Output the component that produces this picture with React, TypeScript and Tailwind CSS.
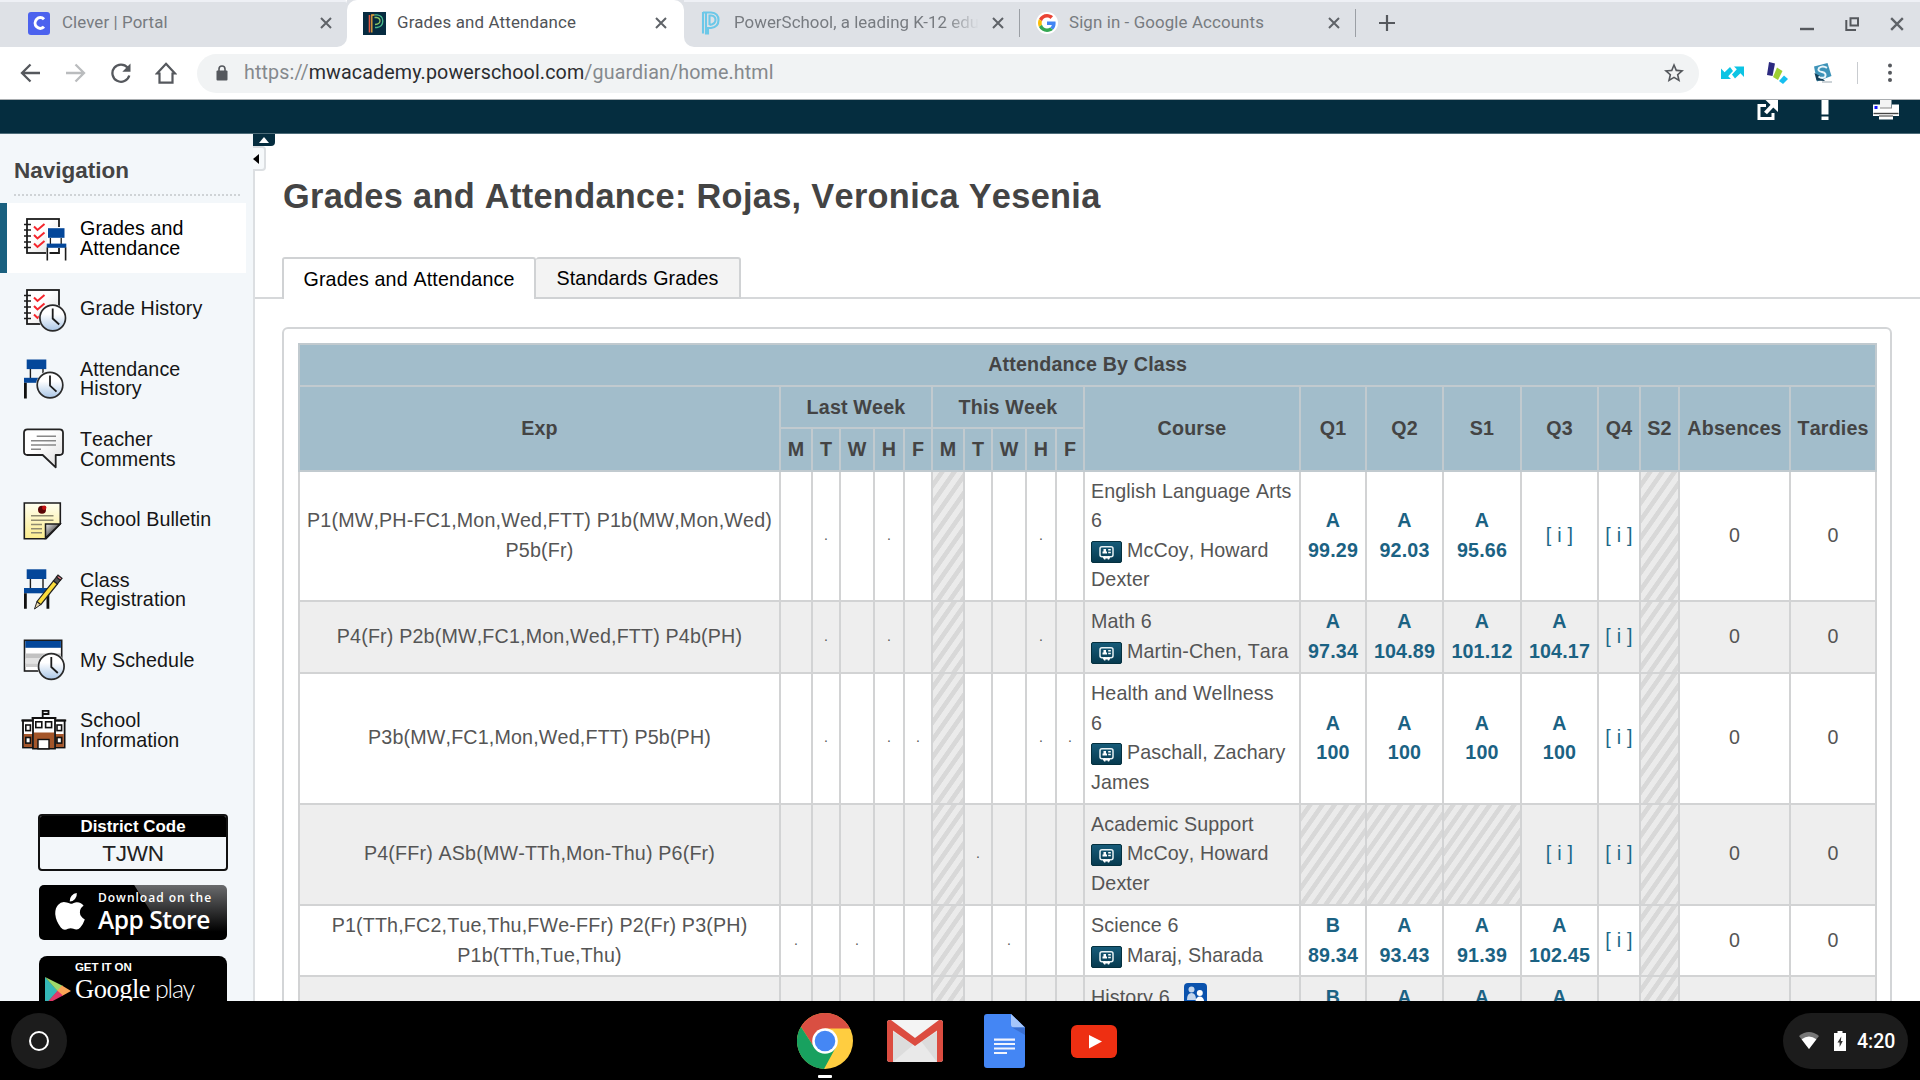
import React from "react";

type IconProps = { children: React.ReactNode };

/* ---------- sidebar icons ---------- */

function NavIcon({ children }: IconProps) {
  return (
    <svg viewBox="0 0 46 46" className="h-[46px] w-[46px] shrink-0 overflow-visible" fill="none">
      <defs>
        <linearGradient id="clockFace" x1="0" y1="0" x2="0" y2="1">
          <stop offset="0.35" stopColor="#ffffff" />
          <stop offset="1" stopColor="#a9c6e6" />
        </linearGradient>
        <linearGradient id="paper" x1="0" y1="0" x2="1" y2="1">
          <stop offset="0.4" stopColor="#ffffff" />
          <stop offset="1" stopColor="#dcdcdc" />
        </linearGradient>
        <linearGradient id="note" x1="0" y1="0" x2="0" y2="1">
          <stop offset="0" stopColor="#fffff0" />
          <stop offset="1" stopColor="#fbec8c" />
        </linearGradient>
        <linearGradient id="fold" x1="0" y1="0" x2="1" y2="1">
          <stop offset="0" stopColor="#eeeeee" />
          <stop offset="0.6" stopColor="#555555" />
        </linearGradient>
      </defs>
      {children}
    </svg>
  );
}

function Notebook() {
  return (
    <g>
      <rect x="5" y="4" width="32" height="34" fill="url(#paper)" stroke="#1c1c1c" strokeWidth="1.8" />
      <path d="M2 9.5h7M2 15h7M2 21h7M2 27h7M2 32.5h7" stroke="#1c1c1c" strokeWidth="1.7" />
      <path d="M12 11.5l3.5 3.5 7-6M12 20l3.5 3.5 7-6M12 28.5l3.5 3.5 7-6" stroke="#f5262c" strokeWidth="2" />
    </g>
  );
}

function Clock({ x, y }: { x: number; y: number }) {
  return (
    <g>
      <circle cx={x} cy={y} r="14" fill="#f3f7fa" />
      <circle cx={x} cy={y} r="12.8" fill="url(#clockFace)" stroke="#2a2a2a" strokeWidth="1.7" />
      <path d={`M${x} ${y - 9.5}V${y + 0.5}L${x + 6.5} ${y + 6.5}`} stroke="#1c1c1c" strokeWidth="1.8" />
    </g>
  );
}

function GradesAttendanceIcon() {
  return (
    <NavIcon>
      <Notebook />
      <path d="M24 27h21v19h-21z" fill="#fff" />
      <path d="M27.5 38H37V33" stroke="#1c1c1c" strokeWidth="1.8" />
      <rect x="25" y="12" width="19" height="17" fill="#fff" />
      <rect x="26" y="13.2" width="16.5" height="9.6" fill="#04479a" />
      <path d="M28.4 23v6M39.2 23v6" stroke="#1c1c1c" strokeWidth="1.3" />
      <rect x="24.7" y="28.6" width="19.6" height="4.2" fill="#04479a" />
      <path d="M25.3 32.5V45.5M43.6 32.5V45.5" stroke="#1c1c1c" strokeWidth="1.6" />
    </NavIcon>
  );
}

function GradeHistoryIcon() {
  return (
    <NavIcon>
      <Notebook />
      <Clock x={30.7} y={32} />
    </NavIcon>
  );
}

function AttendanceHistoryIcon() {
  return (
    <NavIcon>
      <rect x="4.7" y="3.5" width="19.6" height="9.6" fill="#04479a" />
      <path d="M8.4 13v9M21 13v4" stroke="#1c1c1c" strokeWidth="1.4" />
      <rect x="2" y="21.8" width="14" height="5" fill="#04479a" />
      <path d="M3.4 26.8V42.5" stroke="#111" strokeWidth="2.8" />
      <Clock x={28} y={29.1} />
    </NavIcon>
  );
}

function TeacherCommentsIcon() {
  return (
    <NavIcon>
      <path
        d="M5.5 3.3H37.5Q41 3.3 41 6.8V25.5Q41 29 37.5 29H33.7V41.3L20.7 29H5.5Q2 29 2 25.5V6.8Q2 3.3 5.5 3.3Z"
        fill="url(#paper)"
        stroke="#222"
        strokeWidth="1.8"
        strokeLinejoin="round"
      />
      <path d="M14.7 10.3H34M9 14.7H34M9 19H34M9 23.3H19" stroke="#888" strokeWidth="1.6" />
    </NavIcon>
  );
}

function SchoolBulletinIcon() {
  return (
    <NavIcon>
      <path d="M2.3 6H38.3V27L24 41.8H2.3Z" fill="url(#note)" stroke="#1c1c1c" strokeWidth="1.6" />
      <path d="M23.5 41V27H38Z" fill="url(#fold)" stroke="#1c1c1c" strokeWidth="1.5" />
      <path d="M9 18.8H31.5M9 23.3H31.5M9 27.5H20M9 31.7H20M9 35.8H20" stroke="#8f8b70" strokeWidth="1.5" />
      <circle cx="20" cy="12.7" r="4" fill="#5a0505" />
      <circle cx="22.2" cy="10.8" r="2.2" fill="#c01010" />
    </NavIcon>
  );
}

function ClassRegistrationIcon() {
  return (
    <NavIcon>
      <rect x="4.7" y="2.3" width="19.6" height="9.7" fill="#04479a" />
      <path d="M8.4 12v9M21 12v9" stroke="#1c1c1c" strokeWidth="1.4" />
      <rect x="2" y="21" width="25" height="5.3" fill="#04479a" />
      <path d="M3.4 26.3V41.7M25.9 26.3V41.7" stroke="#111" strokeWidth="2.8" />
      <path d="M12.5 42L15 34.5L18.7 37.6Z" fill="#ead9b0" stroke="#222" strokeWidth="1" />
      <path d="M15 34.5L31.5 13.8L35.4 17L18.8 37.7Z" fill="#fbdc3c" stroke="#222" strokeWidth="1.2" />
      <path d="M31.5 13.8L34.5 10L38.4 13.2L35.4 17Z" fill="#555" stroke="#222" strokeWidth="1.2" />
      <path d="M34.5 10L36 8.2L40 11.4L38.4 13.2Z" fill="#f0808a" stroke="#222" strokeWidth="1.2" />
    </NavIcon>
  );
}

function MyScheduleIcon() {
  return (
    <NavIcon>
      <rect x="2.5" y="3.3" width="37.2" height="30.7" fill="#fff" stroke="#1c1c1c" strokeWidth="1.6" />
      <rect x="3.3" y="4" width="35.6" height="6.8" fill="#04479a" />
      <rect x="3.3" y="16.5" width="35.6" height="5" fill="#c2c2c2" />
      <rect x="3.3" y="21.5" width="35.6" height="5" fill="#e3e3e3" />
      <rect x="3.3" y="26.5" width="35.6" height="3.5" fill="#cdcdcd" />
      <Clock x={29.3} y={29.5} />
    </NavIcon>
  );
}

function SchoolInformationIcon() {
  return (
    <NavIcon>
      <rect x="1" y="12.5" width="41.6" height="27" fill="#fff" stroke="#111" strokeWidth="1.8" />
      <rect x="1.8" y="26" width="40" height="13" fill="#a4562a" />
      <path d="M-0.6 12.5H44.2" stroke="#111" strokeWidth="1.8" />
      <rect x="11" y="10" width="22" height="30.6" fill="#fff" stroke="#111" strokeWidth="1.8" />
      <rect x="12" y="24.5" width="20" height="15.5" fill="#a4562a" />
      <path d="M9.6 10H34.4M20.7 10V2.8H26.5V6H20.7" stroke="#111" strokeWidth="1.8" />
      <rect x="16" y="31.5" width="11" height="9.3" fill="#fff" stroke="#111" strokeWidth="1.4" />
      <g fill="#fff" stroke="#111" strokeWidth="1.6">
        <rect x="13.8" y="13.8" width="6" height="5.8" />
        <rect x="23.6" y="13.8" width="6" height="5.8" />
        <rect x="3.8" y="17" width="4.6" height="5.6" />
        <rect x="35" y="17" width="4.6" height="5.6" />
        <rect x="3.8" y="29.5" width="4.6" height="5.6" />
        <rect x="35" y="29.5" width="4.6" height="5.6" />
      </g>
    </NavIcon>
  );
}

/* ---------- browser chrome ---------- */

function CloseX({ className }: { className: string }) {
  return (
    <svg viewBox="0 0 12 12" className={className} stroke="#5f6368" strokeWidth="2" fill="none">
      <path d="M1 1L11 11M11 1L1 11" />
    </svg>
  );
}

function PLogo({ colored }: { colored: boolean }) {
  return colored ? (
    <svg viewBox="0 0 23 23" className="h-[23px] w-[23px]" fill="none" strokeWidth="1.3">
      <rect width="23" height="23" fill="#062b40" />
      <path d="M6.5 20.5V3" stroke="#e05540" strokeWidth="1.6" />
      <path d="M8.8 20.5V3H11.5" stroke="#f0a83a" />
      <path d="M11.5 2.8H14Q19.8 3.5 19.8 9T14 15.5H12" stroke="#49b98c" />
      <path d="M11.5 5.5H13.5Q17 6 17 9T12 12.5" stroke="#8fc863" />
    </svg>
  ) : (
    <svg viewBox="0 0 20 24" className="h-[24px] w-[20px]" fill="none" stroke="#6cc8e8" strokeWidth="2.1">
      <path d="M2 1V22.5M5 1V22.5H7V17H10Q17.5 16 17.5 9T10 1.5H2M8.5 14V4.5H10Q14.5 5 14.5 9T8.5 14" />
    </svg>
  );
}

function GoogleG() {
  return (
    <svg viewBox="0 0 48 48" className="h-[18px] w-[18px]">
      <path fill="#EA4335" d="M24 9.5c3.54 0 6.71 1.22 9.21 3.6l6.85-6.85C35.9 2.38 30.47 0 24 0 14.62 0 6.51 5.38 2.56 13.22l7.98 6.19C12.43 13.72 17.74 9.5 24 9.5z" />
      <path fill="#4285F4" d="M46.98 24.55c0-1.57-.15-3.09-.38-4.55H24v9.02h12.94c-.58 2.96-2.26 5.48-4.78 7.18l7.73 6c4.51-4.18 7.09-10.36 7.09-17.65z" />
      <path fill="#FBBC05" d="M10.53 28.59c-.48-1.45-.76-2.99-.76-4.59s.27-3.14.76-4.59l-7.98-6.19C.92 16.46 0 20.12 0 24c0 3.88.92 7.54 2.56 10.78l7.97-6.19z" />
      <path fill="#34A853" d="M24 48c6.48 0 11.93-2.13 15.89-5.81l-7.73-6c-2.15 1.45-4.92 2.3-8.16 2.3-6.26 0-11.57-4.22-13.47-9.91l-7.98 6.19C6.51 42.62 14.62 48 24 48z" />
    </svg>
  );
}

function Tabs() {
  return (
    <div className="flex h-[47px] shrink-0 font-[Roboto,sans-serif] text-[16.87px] text-[#777b80]">
      <div className="flex w-[347px] bg-[linear-gradient(90deg,#dee1e6_50%,#fff_50%)]">
        <div className="flex w-full items-center rounded-br-[10px] rounded-tr-[3px] border-t-2 border-[#eef0f5] bg-[#dee1e6] pb-[3px] pl-[28px]">
          <div className="grid h-[23px] w-[22px] place-items-center rounded-[3px] bg-[#4c62ee]">
            <svg viewBox="0 0 16 16" className="h-[16px] w-[16px]" fill="none" stroke="#fff" strokeWidth="3">
              <path d="M13 4.2A5.2 5.4 0 1 0 13 11.8" />
            </svg>
          </div>
          <span className="ml-[12px] w-[258px] whitespace-nowrap tracking-[0.1px]">Clever | Portal</span>
          <CloseX className="h-[12px] w-[12px]" />
        </div>
      </div>
      <div className="w-[337px] bg-[#dee1e6]">
        <div className="flex h-full items-center rounded-t-[10px] bg-white pb-px pl-[16px] text-[#505357]">
          <PLogo colored />
          <span className="ml-[11px] w-[258px] whitespace-nowrap tracking-[0.18px]">Grades and Attendance</span>
          <CloseX className="h-[12px] w-[12px]" />
        </div>
      </div>
      <div className="flex grow bg-white">
        <div className="flex w-full items-center rounded-bl-[10px] border-t-2 border-[#eef0f5] bg-[#dee1e6] pb-[3px] pl-[17px]">
          <PLogo colored={false} />
          <span className="ml-[13px] w-[245px] overflow-hidden whitespace-nowrap tracking-[0.03px] [mask-image:linear-gradient(90deg,#000_86%,transparent_100%)]">
            PowerSchool, a leading K-12 education
          </span>
          <CloseX className="ml-[13px] h-[12px] w-[12px]" />
          <div className="ml-[15px] h-[28px] w-px bg-[#9b9fa5]" />
          <div className="ml-[16px] grid h-[22px] w-[22px] place-items-center rounded-full bg-white">
            <GoogleG />
          </div>
          <span className="ml-[11px] w-[259px] whitespace-nowrap tracking-[0.12px]">Sign in - Google Accounts</span>
          <CloseX className="h-[12px] w-[12px]" />
          <div className="ml-[15px] h-[28px] w-px bg-[#9b9fa5]" />
          <svg viewBox="0 0 18 18" className="ml-[22px] h-[18px] w-[18px]" stroke="#55585d" strokeWidth="2.2">
            <path d="M9 1V17M1 9H17" />
          </svg>
          <div className="grow" />
          <svg viewBox="0 0 14 14" className="mt-[2px] h-[14px] w-[14px]" stroke="#55585d" strokeWidth="2.4">
            <path d="M0 12H14" />
          </svg>
          <svg viewBox="0 0 14 14" className="ml-[31px] mt-[2px] h-[14px] w-[14px]" fill="none" stroke="#55585d" strokeWidth="2">
            <path d="M5.5 1.2H13V8.6H5.5ZM1.3 3V13H11" />
          </svg>
          <CloseX className="ml-[31px] mr-[16px] mt-[2px] h-[14px] w-[14px]" />
        </div>
      </div>
    </div>
  );
}

function Toolbar() {
  return (
    <div className="flex h-[53px] shrink-0 items-center border-b border-[#a9adb0] bg-white font-[Roboto,sans-serif]">
      <svg viewBox="0 0 20 20" className="ml-[20px] h-[20px] w-[20px]" fill="none" stroke="#55585d" strokeWidth="2.3">
        <path d="M20 10H2M10.5 1.5L2 10L10.5 18.5" />
      </svg>
      <svg viewBox="0 0 20 20" className="ml-[26px] h-[20px] w-[20px]" fill="none" stroke="#babcbe" strokeWidth="2.3">
        <path d="M0 10H18M9.5 1.5L18 10L9.5 18.5" />
      </svg>
      <svg viewBox="0 0 20 20" className="ml-[25px] h-[20px] w-[20px]" fill="none" stroke="#55585d" strokeWidth="2.3">
        <path d="M16.6 4.6A8.6 8.6 0 1 0 18.3 12.5" />
        <path d="M19.5 0.5V8.7H11.3Z" fill="#55585d" stroke="none" />
      </svg>
      <svg viewBox="0 0 22 22" className="ml-[24px] h-[22px] w-[22px]" fill="none" stroke="#55585d" strokeWidth="2.2">
        <path d="M11 1.8L20 11.5H17.5V20.6H4.5V11.5H2Z" />
      </svg>
      <div className="ml-[20px] flex h-[39px] w-[1502px] items-center rounded-full bg-[#f1f3f4] pl-[19px] pr-[13px]">
        <svg viewBox="0 0 12 16" className="h-[16px] w-[12px]">
          <rect x="0.5" y="5.5" width="11" height="10" rx="1" fill="#55585d" />
          <path d="M3 6V4Q3 1 6 1T9 4V6" fill="none" stroke="#55585d" strokeWidth="1.6" />
        </svg>
        <span className="ml-[16px] grow whitespace-nowrap text-[19.68px] tracking-[0.12px] text-[#85898d]">
          <span>https://</span>
          <span className="text-[#2b2d30]">mwacademy.powerschool.com</span>
          <span>/guardian/home.html</span>
        </span>
        <svg viewBox="0 0 24 24" className="h-[24px] w-[24px]" fill="#55585d">
          <path d="M22 9.24l-7.19-.62L12 2 9.19 8.63 2 9.24l5.46 4.73L5.82 21 12 17.27 18.18 21l-1.63-7.03L22 9.24zM12 15.4l-3.76 2.27 1-4.28-3.32-2.88 4.38-.38L12 6.1l1.71 4.04 4.38.38-3.32 2.88 1 4.28L12 15.4z" />
        </svg>
      </div>
      <svg viewBox="0 0 23 14" className="ml-[22px] h-[14px] w-[23px]" fill="#0cc4e4">
        <path d="M0 2.5V13H10L7.2 10.2L12 5L9 1L3.6 6.3Z" />
        <path d="M23 11V0.5H13L15.8 3.3L11 8.5L14 12.5L19.4 7.2Z" />
      </svg>
      <svg viewBox="0 0 22 24" className="ml-[22px] h-[24px] w-[22px]">
        <path d="M3 1L9 2.5L6.5 15L1 14Z" fill="#2c2a80" />
        <path d="M11 6.5L16.5 10L12 19L7 16Z" fill="#9ed032" />
        <path d="M18 14.5L22 18L17 23L13 20Z" fill="#16bff0" />
      </svg>
      <svg viewBox="0 0 22 22" className="ml-[24px] h-[22px] w-[22px]" fill="none">
        <path d="M2 4.5L15.5 1L19.5 14L5 19.5Z" fill="#3d93b8" />
        <path d="M2.5 11L4.5 18.5L13 19L8 14Z" fill="#143f59" />
        <path d="M15 5.8Q10.5 3 7 6Q5 9 10 10T13 15Q10 17 6.5 14.5" stroke="#e9f5fa" strokeWidth="2" />
        <path d="M10 20H20" stroke="#a9b6bd" strokeWidth="1.2" />
      </svg>
      <div className="ml-[23px] h-[22px] w-px bg-[#c9ccd0]" />
      <svg viewBox="0 0 4 20" className="ml-[30px] h-[20px] w-[4px]" fill="#55585d">
        <circle cx="2" cy="2.5" r="2" />
        <circle cx="2" cy="9.7" r="2" />
        <circle cx="2" cy="17" r="2" />
      </svg>
    </div>
  );
}

function PageBanner() {
  return (
    <div className="flex h-[34px] shrink-0 items-start justify-end border-b border-[#4d6c79] bg-[#052d3f] pr-[21px]">
      <svg viewBox="0 0 22 21" className="h-[21px] w-[22px]" fill="none" stroke="#fff">
        <path d="M9 5.5H2V18.5H16V13" strokeWidth="3" />
        <path d="M8.5 13L16.5 4.5" strokeWidth="4" />
        <path d="M8.5 0H21V12Z" fill="#fff" stroke="none" />
      </svg>
      <svg viewBox="0 0 8 21" className="ml-[42px] h-[21px] w-[8px]" fill="#fff">
        <path d="M0.5 0H7.5V14.5H0.5ZM0.5 16.5H7.5V20H0.5Z" />
      </svg>
      <svg viewBox="0 0 26 21" className="ml-[44px] h-[21px] w-[26px]">
        <path d="M7 0H18.5V8H7Z" fill="#f4f4f4" />
        <path d="M0 4.5H7V8H19V4.5H26V16H20V19.5H6V16H0Z" fill="#fff" />
        <path d="M7 8H19" stroke="#888" strokeWidth="1" />
        <path d="M0.5 13.5H25.5" stroke="#444" strokeWidth="1.4" />
        <path d="M6 16H20" stroke="#999" strokeWidth="2" />
        <rect x="1.5" y="6" width="3" height="3" fill="#1414ff" />
      </svg>
    </div>
  );
}

/* ---------- sidebar ---------- */

const NAV: { lines: string[]; Icon: () => React.JSX.Element; active?: boolean }[] = [
  { lines: ["Grades and", "Attendance"], Icon: GradesAttendanceIcon, active: true },
  { lines: ["Grade History"], Icon: GradeHistoryIcon },
  { lines: ["Attendance", "History"], Icon: AttendanceHistoryIcon },
  { lines: ["Teacher", "Comments"], Icon: TeacherCommentsIcon },
  { lines: ["School Bulletin"], Icon: SchoolBulletinIcon },
  { lines: ["Class", "Registration"], Icon: ClassRegistrationIcon },
  { lines: ["My Schedule"], Icon: MyScheduleIcon },
  { lines: ["School", "Information"], Icon: SchoolInformationIcon },
];

function Sidebar() {
  return (
    <aside className="flex w-[255px] shrink-0 flex-col border-r-2 border-[#dcdfe2] bg-[#f3f7fa]">
      <h2 className="ml-[14px] mt-[22px] text-[22.5px] font-bold leading-[30px] text-[#444]">Navigation</h2>
      <div className="ml-[14px] mt-[8px] w-[226px] shrink-0 border-b-2 border-dotted border-[#cfd3d6]" />
      <nav className="mt-[7px] flex shrink-0 flex-col">
        {NAV.map(({ lines, Icon, active }) => (
          <a
            key={lines[0]}
            className={
              active
                ? "flex h-[70.35px] w-[246px] items-center border-l-[7px] border-[#1a607f] bg-white pl-[15px] text-black"
                : "flex h-[70.35px] w-[246px] items-center pl-[22px] text-[#151515]"
            }
          >
            <Icon />
            <span className="ml-[12px] mt-[1px] text-[19.68px] leading-[19.7px] tracking-[0.08px] [font-kerning:none]">
              {lines.map((l) => (
                <span key={l} className="block whitespace-nowrap">
                  {l}
                </span>
              ))}
            </span>
          </a>
        ))}
      </nav>
      <div className="ml-[38px] mt-[48px] h-[57px] w-[190px] shrink-0 overflow-hidden rounded-[4px] border-2 border-[#111] text-center">
        <div className="h-[21px] bg-black text-[16.9px] font-bold leading-[21px] text-white">District Code</div>
        <div className="h-[32px] text-[22.5px] leading-[34px] tracking-[-0.2px] text-[#222]">TJWN</div>
      </div>
      <div className="ml-[39px] mt-[14px] flex h-[55px] w-[188px] shrink-0 items-start rounded-[5px] bg-black bg-[linear-gradient(58deg,#000_58%,transparent_58.5%),linear-gradient(180deg,#6a6b6d,#000_85%)] pl-[16px] font-['Open_Sans',sans-serif] text-white">
        <svg viewBox="0 0 30 37" className="mt-[8px] h-[37px] w-[30px] shrink-0" fill="#fff">
          <path d="M21.8 0Q22.2 3.4 20 6T14.7 8.6Q14.4 5.3 16.6 2.8T21.8 0Z" />
          <path d="M22 9.2Q26.3 9.3 28.6 12.7Q24.8 15.2 24.9 19.5T29.8 26.4Q28.3 30.9 25.3 34.6Q23.6 36.7 21.4 36.6Q19.8 36.5 18.4 35.8Q15.7 34.7 13 35.8Q11.3 36.7 9.9 36.7Q7.8 36.7 5.8 34.4Q1 28.6 0.3 21.6Q-0.1 15.5 3 12T10.2 9.2Q11.8 9.3 13.6 10.1T16 10.8Q16.8 10.7 18.7 9.9T22 9.2Z" />
        </svg>
        <div className="ml-[13px] whitespace-nowrap">
          <div className="mt-[5px] text-[12px] font-semibold leading-[16px] tracking-[1px]">Download on the</div>
          <div className="text-[24.5px] font-semibold leading-[27px] tracking-[-0.45px]">App Store</div>
        </div>
      </div>
      <div className="ml-[39px] mt-[16px] flex h-[60px] w-[188px] shrink-0 items-start rounded-[8px] bg-black pl-[6px] text-white">
        <svg viewBox="0 0 26 28" className="mt-[21px] h-[28px] w-[26px] shrink-0">
          <path d="M0 0L13 14L0 28Z" fill="#35b8b8" />
          <path d="M0 0L18 9L12.5 14Z" fill="#9fd86a" />
          <path d="M17 8.5L26 14L17 19L12 14Z" fill="#fba657" />
          <path d="M0 28L12.5 13.7L18 18.6Z" fill="#e03a6a" />
        </svg>
        <div className="ml-[4px] whitespace-nowrap">
          <div className="mt-[3px] text-[11.5px] font-bold leading-[16px] tracking-[-0.1px]">GET IT ON</div>
          <div className="-mt-[2px] leading-[30px]">
            <span className="font-['Liberation_Serif',serif] text-[26.5px] tracking-[-0.5px]">Google</span>
            <span className="ml-[5px] font-[Lato,sans-serif] text-[25px] font-light tracking-[-1.2px]">play</span>
          </div>
        </div>
      </div>
    </aside>
  );
}

/* ---------- grades table ---------- */

type Grade = [string, string] | "i" | "x" | "";
type Row = {
  exp: string[];
  days: string;
  course: string;
  courseRest?: string;
  teacher?: string;
  teacherRest?: string;
  badge?: boolean;
  grades: Grade[];
  absences: string;
  tardies: string;
  height: string;
};

const COLS = [481, 32, 28, 34, 30, 28, 32, 28, 34, 30, 28, 216, 66, 77, 78, 77, 42, 39, 111, 86];

/* One character per weekday, Monday–Friday for two weeks: "." attendance mark, "x" not in session. */
const ROWS: Row[] = [
  {
    exp: ["P1(MW,PH-FC1,Mon,Wed,FTT) P1b(MW,Mon,Wed)", "P5b(Fr)"],
    days: " . . x  . ",
    course: "English Language Arts",
    courseRest: "6",
    teacher: "McCoy, Howard",
    teacherRest: "Dexter",
    grades: [["A", "99.29"], ["A", "92.03"], ["A", "95.66"], "i", "i", "x"],
    absences: "0",
    tardies: "0",
    height: "h-[130.5px]",
  },
  {
    exp: ["P4(Fr) P2b(MW,FC1,Mon,Wed,FTT) P4b(PH)"],
    days: " . . x  . ",
    course: "Math 6",
    teacher: "Martin-Chen, Tara",
    grades: [["A", "97.34"], ["A", "104.89"], ["A", "101.12"], ["A", "104.17"], "i", "x"],
    absences: "0",
    tardies: "0",
    height: "h-[71.7px]",
  },
  {
    exp: ["P3b(MW,FC1,Mon,Wed,FTT) P5b(PH)"],
    days: " . ..x  ..",
    course: "Health and Wellness",
    courseRest: "6",
    teacher: "Paschall, Zachary",
    teacherRest: "James",
    grades: [["A", "100"], ["A", "100"], ["A", "100"], ["A", "100"], "i", "x"],
    absences: "0",
    tardies: "0",
    height: "h-[130.8px]",
  },
  {
    exp: ["P4(FFr) ASb(MW-TTh,Mon-Thu) P6(Fr)"],
    days: "     x.   ",
    course: "Academic Support",
    teacher: "McCoy, Howard",
    teacherRest: "Dexter",
    grades: ["x", "x", "x", "i", "i", "x"],
    absences: "0",
    tardies: "0",
    height: "h-[101.2px]",
  },
  {
    exp: ["P1(TTh,FC2,Tue,Thu,FWe-FFr) P2(Fr) P3(PH)", "P1b(TTh,Tue,Thu)"],
    days: ". .  x .  ",
    course: "Science 6",
    teacher: "Maraj, Sharada",
    grades: [["B", "89.34"], ["A", "93.43"], ["A", "91.39"], ["A", "102.45"], "i", "x"],
    absences: "0",
    tardies: "0",
    height: "h-[71.7px]",
  },
  {
    exp: [""],
    days: "     x    ",
    course: "History 6",
    badge: true,
    teacher: "",
    grades: [["B", ""], ["A", ""], ["A", ""], ["A", ""], "", "x"],
    absences: "",
    tardies: "",
    height: "h-[71.7px]",
  },
];

const HATCH =
  "border-2 border-[#d2d3d4] bg-[repeating-linear-gradient(125deg,#ebebeb_0px,#ebebeb_4.8px,#d8d8d8_5.4px,#d8d8d8_9.4px,#ebebeb_10px)] p-0";
const CELL = "border-2 border-[#d2d3d4] p-0 text-center align-middle";
const HEAD = "border-2 border-[#c1cacf] p-0 text-center align-middle font-bold";

function TeacherBadge() {
  return (
    <svg viewBox="0 0 31 22" className="mr-[5px] inline-block h-[22px] w-[31px] align-[-6px]" fill="none">
      <defs>
        <linearGradient id="teacherBadge" x1="0" y1="0" x2="0" y2="1">
          <stop offset="0" stopColor="#175c7a" />
          <stop offset="1" stopColor="#06394e" />
        </linearGradient>
      </defs>
      <rect x="0.5" y="0.5" width="30" height="21" rx="1.5" fill="url(#teacherBadge)" stroke="#04303f" />
      <rect x="9" y="5.7" width="13" height="10" rx="2" stroke="#e8f1f4" strokeWidth="1.5" />
      <path d="M11.5 12.5V10.5H16V12.5ZM12.5 8H15V10.5H12.5Z" fill="#fff" />
      <path d="M17.2 8.7H19.8M17.2 11.5H19.8" stroke="#fff" strokeWidth="1.5" />
      <path d="M12 16.8H19M13.7 15V18.5M17.5 15V18.5" stroke="#fff" strokeWidth="1.5" />
    </svg>
  );
}

function GradeCell({ grade }: { grade: Grade }) {
  if (grade === "x") return <td className={HATCH} />;
  return (
    <td className={CELL}>
      {grade === "i" && <span className="whitespace-nowrap tracking-[0.25px] text-[#1b6788]">[ i ]</span>}
      {Array.isArray(grade) && (
        <div className="whitespace-nowrap font-bold text-[#1b6283]">
          <div className="h-[29.5px]">{grade[0]}</div>
          <div className="h-[29.5px]">{grade[1]}</div>
        </div>
      )}
    </td>
  );
}

function GradesTable() {
  return (
    <table className="w-[1578px] table-fixed border-collapse text-[19.68px] leading-[29.5px] tracking-[0.17px] text-[#555] [font-kerning:none]">
      <colgroup>
        {COLS.map((w, i) => (
          <col key={i} style={{ width: w }} />
        ))}
      </colgroup>
      <thead className="bg-[#a2bdcb] text-[#444]">
        <tr className="h-[42.2px]">
          <th colSpan={20} className={HEAD}>
            Attendance By Class
          </th>
        </tr>
        <tr className="h-[42.2px]">
          <th rowSpan={2} className={HEAD}>Exp</th>
          <th colSpan={5} className={HEAD}>Last Week</th>
          <th colSpan={5} className={HEAD}>This Week</th>
          <th rowSpan={2} className={HEAD}>Course</th>
          {["Q1", "Q2", "S1", "Q3", "Q4", "S2", "Absences", "Tardies"].map((h) => (
            <th key={h} rowSpan={2} className={HEAD}>
              {h}
            </th>
          ))}
        </tr>
        <tr className="h-[42.2px]">
          {[..."MTWHFMTWHF"].map((d, i) => (
            <th key={i} className={HEAD}>
              {d}
            </th>
          ))}
        </tr>
      </thead>
      <tbody>
        {ROWS.map((r, i) => (
          <tr key={i} className={`${r.height} ${i % 2 ? "bg-[#eeeeee]" : "bg-white"}`}>
            <td className={CELL}>
              {r.exp.map((l) => (
                <div key={l} className="whitespace-nowrap">
                  {l}
                </div>
              ))}
            </td>
            {[...r.days].map((d, k) =>
              d === "x" ? (
                <td key={k} className={HATCH} />
              ) : (
                <td key={k} className={`${CELL} text-[14px]`}>
                  {d.trim()}
                </td>
              ),
            )}
            <td className="whitespace-nowrap border-2 border-[#d2d3d4] py-0 pl-[6px] pr-0 text-left align-middle tracking-[0.12px]">
              <div className="flex h-[29.5px] items-start">
                {r.course}
                {r.badge && (
                  <svg viewBox="0 0 23 23" className="ml-[14px] h-[23px] w-[23px]">
                    <rect width="23" height="23" rx="4" fill="#0a52ad" />
                    <circle cx="7.5" cy="6.5" r="3" fill="#c4d6ec" />
                    <path d="M3 17Q3 10 7.5 10T12 17Z" fill="#c4d6ec" />
                    <circle cx="15.8" cy="10" r="3" fill="#fff" />
                    <path d="M11.3 21Q11.3 13.5 15.8 13.5T20.3 21Z" fill="#fff" />
                  </svg>
                )}
              </div>
              {r.courseRest && <div>{r.courseRest}</div>}
              <div className="h-[29.5px]">
                <TeacherBadge />
                {r.teacher}
              </div>
              {r.teacherRest && <div>{r.teacherRest}</div>}
            </td>
            {r.grades.map((g, k) => (
              <GradeCell key={k} grade={g} />
            ))}
            <td className={CELL}>{r.absences}</td>
            <td className={CELL}>{r.tardies}</td>
          </tr>
        ))}
      </tbody>
    </table>
  );
}

function Main() {
  return (
    <main className="flex min-w-0 grow flex-col bg-white">
      <div className="relative h-0 shrink-0">
        <div className="absolute -left-[2px] -top-px grid h-[13px] w-[22px] place-items-center rounded-br-[4px] bg-[#052d3f]">
          <svg viewBox="0 0 10 6" className="h-[6px] w-[10px]" fill="#fff">
            <path d="M5 0L10 6H0Z" />
          </svg>
        </div>
        <div className="absolute -left-[2px] top-[12px] flex h-[25px] w-[13px] items-center rounded-r-[4px] border-2 border-l-0 border-[#dcdfe2] bg-[#f6f9fb]">
          <svg viewBox="0 0 6 10" className="h-[10px] w-[6px]" fill="#000">
            <path d="M0 5L6 0V10Z" />
          </svg>
        </div>
      </div>
      <h1 className="ml-[28px] mt-[42px] shrink-0 whitespace-nowrap text-[34.3px] font-bold leading-[40px] tracking-[0.33px] text-[#444] [font-kerning:none]">
        Grades and Attendance: Rojas, Veronica Yesenia
      </h1>
      <div className="mt-[41px] flex h-[42px] shrink-0 text-[19.68px] tracking-[0.16px] text-black [font-kerning:none]">
        <div className="w-[27px] border-b-2 border-[#d6d8da]" />
        <div className="grid w-[254px] place-items-center rounded-t-[3px] border-2 border-b-0 border-[#d0d2d4] bg-white pt-px">
          Grades and Attendance
        </div>
        <div className="grid w-[205px] place-items-center rounded-t-[3px] border-2 border-l-0 border-[#d0d2d4] bg-[#f3f3f3] pt-[2px]">
          Standards Grades
        </div>
        <div className="grow border-b-2 border-[#d6d8da]" />
      </div>
      <div className="ml-[27px] mt-[28px] h-[760px] w-[1610px] shrink-0 rounded-t-[6px] border-2 border-[#d3d5d7] pl-[14px] pt-[14px]">
        <GradesTable />
      </div>
    </main>
  );
}

/* ---------- shelf ---------- */

function Shelf() {
  return (
    <footer className="flex h-[79px] shrink-0 items-center bg-black text-white">
      <div className="ml-[11px] grid h-[56px] w-[56px] place-items-center rounded-full bg-[#1c1c1c]">
        <div className="h-[20px] w-[20px] rounded-full border-[2.6px] border-white" />
      </div>
      <div className="ml-[730px] flex h-full flex-col items-center pt-[12px]">
        <svg viewBox="0 0 56 56" className="h-[56px] w-[56px]">
          <circle cx="28" cy="28" r="28" fill="#ffcd40" />
          <path d="M28 0A28 28 0 0 1 53.1 15.5H28L17 34L3.9 13.7A28 28 0 0 1 28 0Z" fill="#d94f42" />
          <path d="M3.9 13.7A28 28 0 0 0 27 56L39 34H17Z" fill="#18a15f" />
          <circle cx="28" cy="28" r="12.8" fill="#fff" />
          <circle cx="28" cy="28" r="10.3" fill="#4587f4" />
        </svg>
        <div className="mt-[6px] h-[3px] w-[14px] rounded-[1px] bg-white" />
      </div>
      <svg viewBox="0 0 56 42" className="ml-[34px] mt-px h-[42px] w-[56px]">
        <path d="M3 0H53Q56 0 56 3V39Q56 42 53 42H3Q0 42 0 39V3Q0 0 3 0Z" fill="#e6e6e6" />
        <path d="M6 42V12L28 26L50 12V42Z" fill="#dcdcdc" />
        <path d="M6 42L26 25L34 21L50 42Z" fill="#e9e9e9" />
        <path d="M4 0H52L28 18Z" fill="#f4f4f4" />
        <path d="M0 3Q0 0 3 0H4L28 18L52 0H53Q56 0 56 3V39Q56 42 53 42H50V10.5L28 26L6 10.5V42H3Q0 42 0 39Z" fill="#dc4c40" />
      </svg>
      <svg viewBox="0 0 41 54" className="ml-[41px] mt-px h-[54px] w-[41px]">
        <path d="M3 0H27L41 13.5V51Q41 54 38 54H3Q0 54 0 51V3Q0 0 3 0Z" fill="#4486f4" />
        <path d="M27 0L41 13.5H30Q27 13.5 27 10.5Z" fill="#a6c6fa" />
        <path d="M28 13.5H41V21Z" fill="#3a6fd0" />
        <path d="M10 25.7H31M10 30H31M10 34.5H31M10 39H23" stroke="#f1f4fd" strokeWidth="2.2" />
      </svg>
      <svg viewBox="0 0 46 33" className="ml-[46px] mt-px h-[33px] w-[46px]">
        <rect width="46" height="33" rx="6" fill="#ee2f12" />
        <path d="M18 10L31 16.5L18 23.5Z" fill="#fff" />
      </svg>
      <div className="ml-auto mr-[12px] flex h-[56px] w-[125px] items-center rounded-full bg-[#1c1c1c] font-[Roboto,sans-serif]">
        <svg viewBox="0 0 20 17" className="ml-[16px] h-[17px] w-[20px]">
          <path d="M0 4Q10 -4 20 4L10 17Z" fill="#777" />
          <path d="M2.6 7.3Q10 1.5 17.4 7.3L10 17Z" fill="#fff" />
        </svg>
        <svg viewBox="0 0 12 20" className="ml-[15px] h-[20px] w-[12px]">
          <path d="M3.5 0H8.5V2H12V20H0V2H3.5Z" fill="#fff" />
          <path d="M7.3 5.5L3.5 11.5H5.6V16L8.8 10H6.9Z" fill="#333" />
        </svg>
        <span className="ml-[11px] mt-[2px] text-[19.5px] font-medium">4:20</span>
      </div>
    </footer>
  );
}

export default function App() {
  return (
    <div className="flex h-[1080px] w-[1920px] flex-col overflow-hidden bg-white font-['Liberation_Sans',Arial,sans-serif]">
      <Tabs />
      <Toolbar />
      <PageBanner />
      <div className="flex h-[867px] shrink-0 overflow-hidden">
        <Sidebar />
        <Main />
      </div>
      <Shelf />
    </div>
  );
}
